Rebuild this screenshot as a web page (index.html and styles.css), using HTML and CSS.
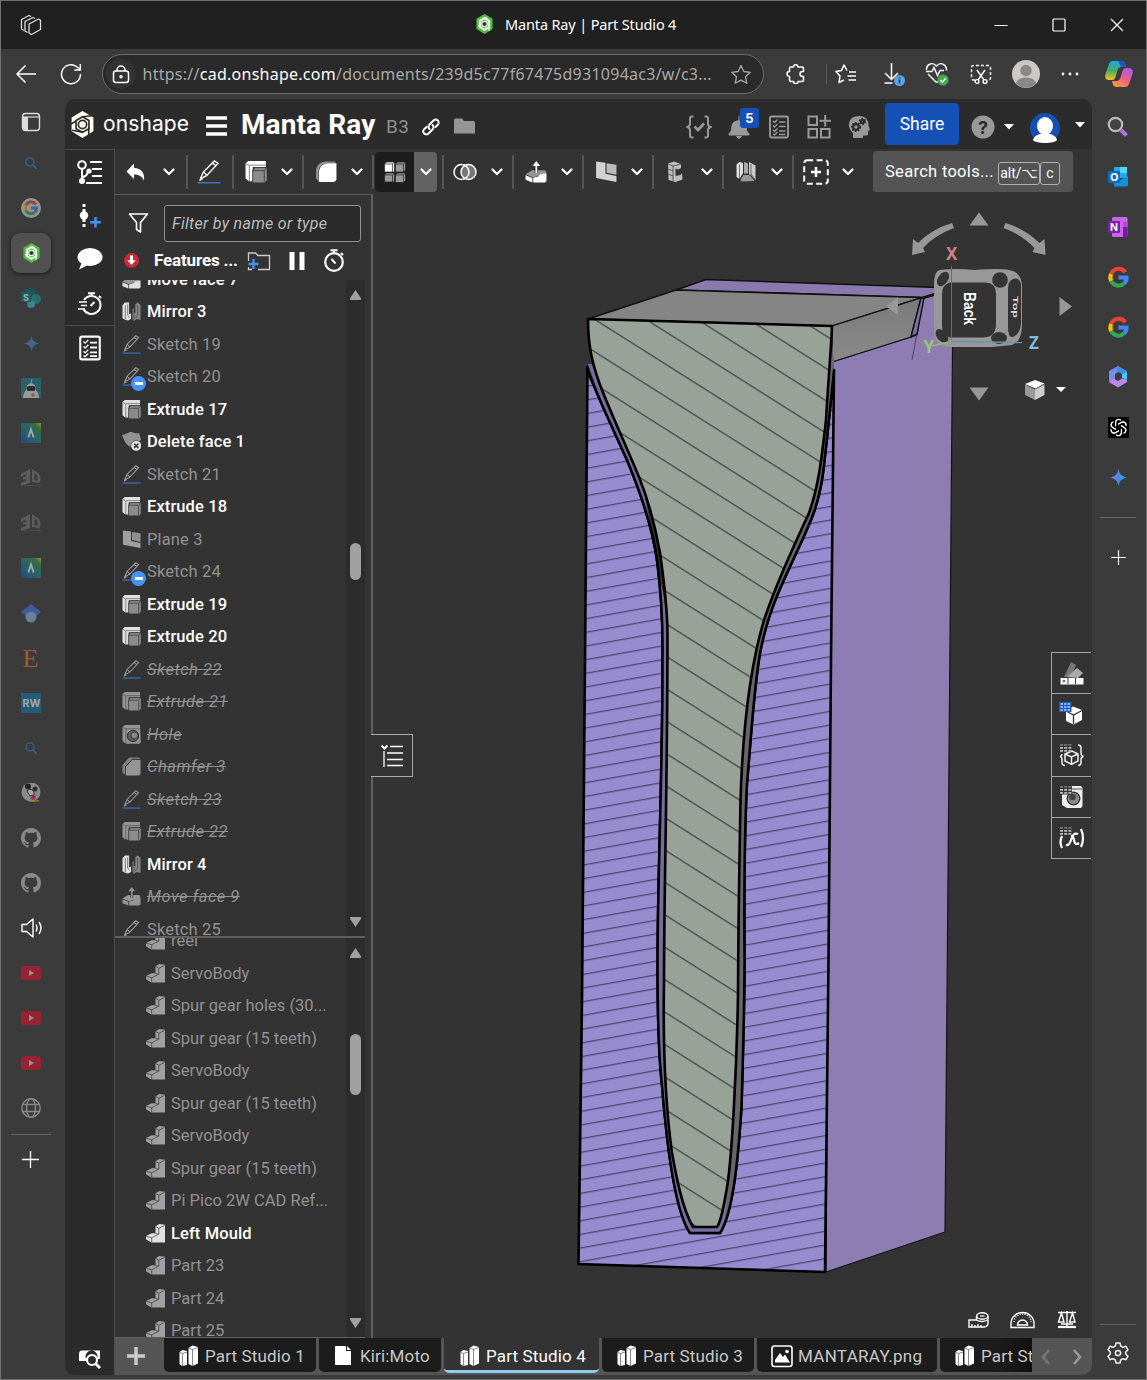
FILE: index.html
```html
<!DOCTYPE html>
<html lang="en">
<head>
<meta charset="utf-8">
<title>Manta Ray | Part Studio 4</title>
<link rel="stylesheet" href="styles.css">
</head>
<body>
<svg class="defs" width="0" height="0" aria-hidden="true">
<defs>
<linearGradient id="gem" x1="0" x2="1" y1="0.3" y2="0.6"><stop offset="0.1" stop-color="#b56fd0"/><stop offset="0.5" stop-color="#4a86e8"/><stop offset="1" stop-color="#1fb0ee"/></linearGradient>
<linearGradient id="ag" x1="0" x2="1" y1="1" y2="0"><stop offset="0" stop-color="#1757b8"/><stop offset="0.55" stop-color="#1a8a8a"/><stop offset="0.8" stop-color="#2c9a3c"/><stop offset="1" stop-color="#e8d820"/></linearGradient>
<symbol id="sketch" viewBox="0 0 20 20"><path d="M3 15.500l2.200-5.500L14.500 0.800l3 2L8 13z M5.500 10l2.800 2.800 M12.800 2.600l3 2.200" fill="none" stroke="currentColor" stroke-width="1.100"/><path d="M1.800 18l1.400-4 2 1.800z" fill="currentColor"/><path d="M0.500 19h19" stroke="#3a76c0" stroke-width="1.200"/></symbol>
<symbol id="extrude" viewBox="0 0 20 20"><path d="M0.500 2L3 0h16v5.500H7V18.500H3.500L.5 16z" fill="currentColor"/><path d="M0.500 2.200L4 4.300V18.500M4 3.800h15" fill="none" stroke="#444" stroke-width="0.600"/><path d="M7 8.500L9 6h10.800v11.500L18 19.500H7z" fill="#8b8b8b"/><path d="M7 19.500V8.500L9 6h10.800M7 8.700h10.500l2.300-2.500M17.500 8.700v10.500" fill="none" stroke="#333" stroke-width="0.700"/></symbol>
<symbol id="mirror" viewBox="0 0 20 20"><path d="M0.500 3.500L3 .5h4.500V13L9.500 12v6l-3 1.500-3-.5-3-2z" fill="currentColor"/><path d="M11 7.500V18l1.500 2 3-2 4 1V3L16.500.5 14 2v9.500h-1.500V6z" fill="#858585"/><path d="M3.500 3.500v15M6 2.500v11.500l2 2M12.500 6v13M16.500 3v11.500l-3 2" fill="none" stroke="#444" stroke-width="0.700"/></symbol>
<symbol id="plane" viewBox="0 0 20 20"><path d="M1 0.500l8.500 1.200v9.800l10 2.200v5.300L1 15.500z" fill="currentColor"/><path d="M10.500 2l9 1.400v9.200l-9-2z" fill="currentColor" opacity="0.850"/></symbol>
<symbol id="fillet" viewBox="0 0 20 20"><path d="M3.500 19V11c0-6 4-9 8-9h8v15l-2 2z" fill="currentColor"/><path d="M1 16V8c1-5 5-7.500 9-7.500h8l1 1h-7C7 1.500 3 5 3 11v7z" fill="#979797"/></symbol>
<symbol id="chamfer" viewBox="0 0 20 20"><path d="M4 19.500v-9L11 3h8.500V18l-1.500 1.500z" fill="currentColor"/><path d="M0.500 8.500l7-8H18l1.500 1.500H11L3.500 10v9L.5 16.500z" fill="#808080"/><path d="M3.700 19.500V10L11 2.500h8.500" fill="none" stroke="#333" stroke-width="0.700"/></symbol>
<symbol id="hole" viewBox="0 0 20 20"><path d="M0.500 2L3 0h16l.8 18-1.300 1.800H4.500L.5 17z" fill="currentColor"/><path d="M0.500 2.500L4 4H19M4 4v15" fill="none" stroke="#444" stroke-width="0.600"/><circle cx="11.500" cy="11.500" r="6" fill="#5b5b5b" stroke="#333"/><circle cx="13" cy="11" r="3.600" fill="#888" stroke="#333" stroke-width="0.800"/></symbol>
<symbol id="moveface" viewBox="0 0 20 20"><path d="M0.500 12l6-3.500h12l1 2.500-12 4z" fill="#979797"/><path d="M7.500 15.200l4.500-1.200 2-2 5.500-.8v7.300l-1.500 1H7.500zM.5 13l6.200 2.500v4L.5 17z" fill="currentColor"/><path d="M10.300 11V3" stroke="#333" stroke-width="3"/><path d="M10.300 11V3" stroke="currentColor" stroke-width="1.600"/><path d="M6.800 4.500L10.300 0l3.500 4.500z" fill="currentColor"/></symbol>
<symbol id="delface" viewBox="0 0 20 20"><path d="M0 3c4 0 6-3 10-3 4 1 5 2 8 1l2 7-6 9C8 17 3 13 0 3z" fill="#929292"/><circle cx="15" cy="14.500" r="5.600" fill="#e0e0e0" stroke="#333" stroke-width="0.600"/><path d="M12.800 12.300l4.400 4.400m0-4.400l-4.400 4.400" stroke="#333" stroke-width="1.600"/></symbol>
<symbol id="part" viewBox="0 0 20 20"><path d="M10 2.300L14 0l6 .8V19.500H5.500L0 16v-3.500l6-2.700h4z" fill="currentColor"/><path d="M10 2.500l3.500 2V10.500L6 14.500 0 12.800M13.500 4.500L19.500 1.500M10 10l3.500.8M6 14.500v5" fill="none" stroke="#333" stroke-width="0.700"/></symbol>
<symbol id="chev" viewBox="0 0 14 10"><path d="M2.500 2.500L7 7l4.500-4.500" fill="none" stroke="#fff" stroke-width="2.200" stroke-linecap="round" stroke-linejoin="round"/></symbol>
<symbol id="check" viewBox="0 0 24 24"><rect x="3" y="1.500" width="18" height="21" rx="1.500" fill="none" stroke="currentColor" stroke-width="1.900"/><path d="M6 6l1.500 1.500L10.500 4.500M6 10.500L7.500 12l3-3M6 15l1.500 1.500 3-3M6 19l1.500 1 3-3" fill="none" stroke="currentColor" stroke-width="1.300"/><path d="M12 7h6.500M12 11.500h6.500M12 16h6.500M12 19.500h6.500" stroke="currentColor" stroke-width="1.700"/></symbol>
<symbol id="google" viewBox="0 0 24 24"><g fill="none" stroke-width="4.200"><path d="M19.200 6.500A8.500 8.500 0 0 0 4.400 8.200" stroke="#ea4335"/><path d="M4.400 8.200a8.500 8.500 0 0 0 0 7.600" stroke="#fbbc05"/><path d="M4.400 15.800A8.500 8.500 0 0 0 17.700 18.300" stroke="#34a853"/><path d="M17.700 18.300c2.200-2 2.800-4.500 2.700-6.300H12" stroke="#4285f4"/></g></symbol>
<symbol id="os" viewBox="0 0 24 26"><path d="M12 0l10.500 6.200v13.300L12 26 1.500 19.500V6.200z" fill="currentColor"/><path d="M12 5.500l6.200 3.700v7.800L12 20.500l-6.200-3.500V9.200z" fill="none" stroke="#2b2b2b" stroke-width="1.600"/><circle cx="12" cy="13" r="4" fill="none" stroke="#2b2b2b" stroke-width="1.600"/><path d="M6 9.500l-5 3M12 5.500l9-1M18 16v7M12 20.500l-10-2" stroke="#2b2b2b" stroke-width="1.500"/></symbol>
<symbol id="osg" viewBox="0 0 24 26"><path d="M12 0l10.500 6.200v13.300L12 26 1.500 19.500V6.200z" fill="#55b948"/><path d="M12 5.500l6 3.400v8L12 20.500l-6-3.600v-8z" fill="none" stroke="#f3fff0" stroke-width="2.600"/><circle cx="12" cy="13" r="3.500" fill="#333" stroke="#f3fff0" stroke-width="1.500"/><path d="M4 15l3 2M11 4.500l5 1M18 18v4" stroke="#fff" stroke-width="1.500"/></symbol>
<symbol id="mag" viewBox="0 0 20 20"><circle cx="8.500" cy="8.500" r="5.800" fill="none" stroke="#2d8be0" stroke-width="2"/><path d="M13 13l5 5" stroke="#2d8be0" stroke-width="2.200"/></symbol>
<symbol id="gemini" viewBox="0 0 20 20"><path d="M10 0.500c.8 6 3.500 8.700 9.500 9.500-6 .8-8.700 3.500-9.500 9.500C9.200 13.500 6.500 10.800.5 10 6.500 9.200 9.200 6.500 10 .5z" fill="url(#gem)"/></symbol>
<symbol id="autod" viewBox="0 0 20 20"><rect width="20" height="20" fill="url(#ag)"/><path d="M7.300 14.500L10 6.500l2.700 8" fill="none" stroke="#fff" stroke-width="1.900"/></symbol>
<symbol id="threeD" viewBox="0 0 20 20"><path d="M0 6L9 1v14L0 18v-3l5-2v-2l-3 .8V9.500L5 8.500V6.500L0 9z" fill="#aaa"/><path d="M11 1l6 4c3 2 3 8 1 10l-7-1zM13.500 5v7l3 .7V8z" fill="#aaa" fill-rule="evenodd"/><path d="M3 18l16-1v2" stroke="#777" fill="none"/></symbol>
<symbol id="github" viewBox="0 0 16 16"><path fill="#ccc" d="M8 0C3.580 0 0 3.580 0 8c0 3.540 2.290 6.530 5.470 7.590.4.070.55-.17.55-.38 0-.19-.01-.82-.01-1.490-2.010.37-2.530-.49-2.690-.94-.09-.23-.48-.94-.82-1.130-.28-.15-.68-.52-.01-.53.63-.01 1.080.58 1.230.82.72 1.210 1.870.87 2.330.66.070-.52.280-.87.510-1.070-1.780-.2-3.640-.89-3.640-3.950 0-.87.310-1.590.82-2.150-.08-.2-.36-1.020.08-2.120 0 0 .67-.21 2.200.82.640-.18 1.320-.27 2-.27s1.360.09 2 .27c1.530-1.040 2.200-.82 2.200-.82.440 1.100.160 1.920.080 2.120.510.560.820 1.270.820 2.150 0 3.070-1.870 3.750-3.650 3.950.290.250.540.730.540 1.480 0 1.070-.01 1.930-.01 2.200 0 .210.150.460.550.380A8.010 8.010 0 0 0 16 8c0-4.420-3.580-8-8-8z"/></symbol>
<symbol id="yt" viewBox="0 0 20 14"><rect width="20" height="14" rx="3" fill="#e0102e"/><path d="M8 4l5 3-5 3z" fill="#ddd"/></symbol>
<symbol id="studio" viewBox="0 0 22 22"><path d="M1.500 7l3-2 4.500 1v14l-5 1-2.500-2zM10.500 3l4-2.500 5.500 1.500v16.500l-5.500 2.500-4-2z" fill="#fff"/><path d="M1.500 7.300L4.500 8.500V21M4.500 8.500L9 7M10.500 3l4 1.500V21M14.500 4.500l5.500-2" fill="none" stroke="#555" stroke-width="0.700"/></symbol>
<symbol id="dots9" viewBox="0 0 12 9"><path d="M0 1h3v1.800H0zM4.200 1h3v1.800h-3zM8.400 1h3v1.800h-3z" fill="#777"/><path d="M0 4h3v1.800H0zM4.200 4h3v1.800h-3zM8.400 4h3v1.800h-3zM0 7h3v1.800H0zM4.200 7h3v1.800h-3zM8.400 7h3v1.800h-3z" fill="#bbb"/></symbol>
</defs>
</svg>

<div class="window">
  <header class="titlebar">
    <svg class="workspaces" width="22" height="22" viewBox="0 0 22 22" fill="none" stroke="#ddd" stroke-width="1.300" stroke-linejoin="round"><path d="M4 16.500L1.500 15V5.500L9 1.500l2 1"/><path d="M7.500 18.500L5 17V7.500L13 3.500l2 1"/><path d="M9 10l9.500-5 2 1.200V15.500L11.500 20.500 9 19z"/></svg>
    <div class="doc-title"><svg width="19" height="20"><use href="#osg"/></svg><span class="fit-title">Manta Ray | Part Studio 4</span></div>
    <div class="controls">
      <svg width="14" height="14"><path d="M0.500 7.500h13" stroke="#fff"/></svg>
      <svg width="14" height="14"><rect x="1" y="1" width="12" height="12" rx="1" fill="none" stroke="#fff" stroke-width="1.200"/></svg>
      <svg width="14" height="14"><path d="M1 1l12 12M13 1L1 13" stroke="#fff" stroke-width="1.200"/></svg>
    </div>
  </header>

  <nav class="browserbar">
    <svg width="22" height="20" fill="none" stroke="#fff" stroke-width="1.500"><path d="M21 10H2M10.500 1.500L2 10l8.500 8.500"/></svg>
    <svg width="22" height="22" fill="none" stroke="#fff" stroke-width="1.500"><path d="M20.500 11A9.500 9.500 0 1 1 16.500 3.500L20 6.500M20.300 1v6h-6"/></svg>
    <span></span>
    <div class="address">
      <span class="lock"><svg width="18" height="19" fill="none" stroke="#fff" stroke-width="1.500"><rect x="1.500" y="6" width="15" height="11.500" rx="2.500"/><path d="M5 6V5a4 4 0 0 1 8 0v1"/><circle cx="9" cy="11.700" r="1" fill="#fff"/></svg></span>
      <span class="url">https://<b>cad.onshape.com</b>/documents/239d5c77f67475d931094ac3/w/c3...</span>
      <svg width="22" height="21" viewBox="0 0 22 21" fill="none" stroke="#aaa" stroke-width="1.300" stroke-linejoin="round"><path d="M11 1.500l2.800 6 6.500.8-4.800 4.500 1.300 6.500-5.800-3.200-5.800 3.200 1.300-6.500L1.700 8.300l6.500-.8z"/></svg>
    </div>
    <svg class="ext" width="20" height="20" viewBox="0 0 20 20" fill="none" stroke="#fff" stroke-width="1.500" stroke-linejoin="round"><path d="M7.500 3a2.200 2.200 0 0 1 4.400 0H16q1.500 0 1.500 1.500V7.500h-1a2.500 2.500 0 0 0 0 5h1V16q0 1.500-1.500 1.500h-4a2.200 2.200 0 0 1-4.400 0H5Q3.500 17.500 3.500 16v-3.500a2.500 2.500 0 0 1 0-5V4.500Q3.500 3 5 3z"/></svg>
    <i class="bar-sep"></i>
    <svg width="22" height="20" fill="none" stroke="#fff" stroke-width="1.500" stroke-linejoin="round"><path d="M12 6.500L9 1 6.500 6.500 1 7.500 5 12l-1 6.500 5-2.500M14 8h7M12.500 12h8.500M13.500 16H21"/></svg>
    <svg class="dl" width="22" height="24" fill="none"><path d="M8.500 1v16M2 11l6.500 6.500L15 11M1.500 21h8" stroke="#fff" stroke-width="1.500"/><circle cx="16.500" cy="18.500" r="5.500" fill="#58a6e4"/><path d="M16.500 17.500v4M16.500 15v1.200" stroke="#234" stroke-width="1.500"/></svg>
    <svg width="24" height="24" fill="none" stroke="#fff" stroke-width="1.400"><path d="M13 20l-2 0L3 12M1.500 8C1 3 7-1 11.500 4 16-1 22 3 21.500 8.500M1 9.500h6l2-4 3.500 8 2.500-5h4"/><circle cx="18" cy="18" r="5.600" fill="#46a84d" stroke="none"/><path d="M15.500 18l2 2 3.500-4"/></svg>
    <svg width="22" height="22" fill="none" stroke="#fff" stroke-width="1.400"><path d="M5 17H3.500Q1.500 17 1.500 15V4.500q0-2 2-2h15q2 0 2 2V15q0 2-2 2H17" stroke-dasharray="3 2"/><path d="M7 7l7 10M15 7L8 17"/><circle cx="7" cy="18.500" r="1.900"/><circle cx="15" cy="18.500" r="1.900"/></svg>
    <svg width="28" height="28"><circle cx="14" cy="14" r="14" fill="#cbc9c6"/><circle cx="14" cy="10.500" r="5.800" fill="#8b8986"/><path d="M4 23.500c1-8 19-8 20 0a14 14 0 0 1-20 0" fill="#8b8986"/></svg>
    <svg width="18" height="4" fill="#fff"><circle cx="2" cy="2" r="1.400"/><circle cx="9" cy="2" r="1.400"/><circle cx="16" cy="2" r="1.400"/></svg>
    <svg width="28" height="28" viewBox="0 0 28 28"><defs><linearGradient id="cpa" x1="0" x2="0" y1="0" y2="1"><stop offset="0" stop-color="#20a8ee"/><stop offset="0.5" stop-color="#48a968"/><stop offset="1" stop-color="#f3c51a"/></linearGradient><linearGradient id="cpb" x1="0.8" x2="0.2" y1="0" y2="1"><stop offset="0" stop-color="#a45bea"/><stop offset="0.5" stop-color="#ef5e88"/><stop offset="1" stop-color="#ff9a35"/></linearGradient></defs><path d="M8 1h8c3 0 4 1.500 5 6h-4c-3 0-4 1.500-5 5l-1.500 5C9.800 19 9 20 7 20H4c-3.500 0-4.500-3-3.500-6L4 4c.7-2 2-3 4-3z" fill="url(#cpa)"/><path d="M13 1h3c3 0 4 1.500 5 6h-5z" fill="#1b56c8"/><path d="M20 27h-8c-3 0-4-1.500-5-6h4c3 0 4-1.500 5-5l1.500-5c.7-2 1.500-3 3.500-3h3c3.500 0 4.500 3 3.500 6L24 24c-.7 2-2 3-4 3z" fill="url(#cpb)"/></svg>
  </nav>

  <div class="main">
    <aside class="vtabs">
      <div class="vtab top"><svg width="20" height="20"><rect x="1.500" y="1.500" width="17" height="17" rx="3" fill="none" stroke="#ddd" stroke-width="1.400"/><path d="M2 5h5v13H4q-2 0-2-2z" fill="#ddd"/><path d="M2 5h16" stroke="#ddd" stroke-width="1.200"/></svg></div>
      <div class="vtab dim"><svg width="14" height="14"><use href="#mag"/></svg></div>
      <div class="vtab dim"><svg width="20" height="20"><circle cx="10" cy="10" r="10" fill="#ddd"/><use href="#google" x="2" y="2" width="16" height="16"/></svg></div>
      <div class="vtab active"><svg width="19" height="20"><use href="#osg"/></svg></div>
      <div class="vtab dim"><svg width="20" height="20"><circle cx="9" cy="6" r="6" fill="#036c70"/><circle cx="15" cy="11" r="5" fill="#1a9ba1"/><circle cx="10" cy="16" r="4" fill="#37c6d0"/><rect y="4" width="10" height="10" rx="1" fill="#03787c"/><text x="2" y="12.500" class="ico-letter" font-size="9" fill="#fff">S</text></svg></div>
      <div class="vtab dim"><svg width="17" height="17"><use href="#gemini"/></svg></div>
      <div class="vtab dim"><svg width="20" height="20"><rect width="20" height="20" fill="#1b8191"/><path d="M2 20c0-5 2-6 3-8 0-9 10-9 10 0 1 2 3 3 3 8z" fill="#e5e5e5"/><path d="M10 5l1-4" stroke="#ddd"/><rect x="5.500" y="8" width="9" height="5" rx="2.500" fill="#222"/><circle cx="12" cy="17" r="1.800" fill="#e66"/></svg></div>
      <div class="vtab dim"><svg width="20" height="20"><use href="#autod"/></svg></div>
      <div class="vtab dimmer"><svg width="20" height="20"><use href="#threeD"/></svg></div>
      <div class="vtab dimmer"><svg width="20" height="20"><use href="#threeD"/></svg></div>
      <div class="vtab dim"><svg width="20" height="20"><use href="#autod"/></svg></div>
      <div class="vtab dim"><svg width="20" height="20"><path d="M10 1l10 8-10 8L0 9z" fill="#3f7be8"/><circle cx="10" cy="14" r="5.500" fill="#94b3ee"/></svg></div>
      <div class="vtab dim"><svg width="20" height="32"><text x="1.500" y="24.500" class="ico-serif" fill="#f1741e">E</text></svg></div>
      <div class="vtab dim"><svg width="20" height="20"><rect width="20" height="20" fill="#1277a8"/><text x="1.500" y="14" class="ico-letter" font-size="10.500" fill="#fff">RW</text></svg></div>
      <div class="vtab dim"><svg width="14" height="14"><use href="#mag"/></svg></div>
      <div class="vtab dim"><svg width="20" height="20"><circle cx="10" cy="9" r="9.500" fill="#ccc"/><circle cx="7" cy="3.500" r="3" fill="#111"/><circle cx="14" cy="6" r="2.500" fill="#222"/><path d="M6 8c4-4 8 0 7 4l-4 1z" fill="#fff" stroke="#222"/><path d="M12 12l3 1-1 4-5-1z" fill="#d33"/><path d="M8 19q3-3 5-1 4-2 6 0l-5 1z" fill="#e0b000"/></svg></div>
      <div class="vtab dim"><svg width="20" height="20"><use href="#github"/></svg></div>
      <div class="vtab dim"><svg width="20" height="20"><use href="#github"/></svg></div>
      <div class="vtab"><svg width="21" height="20" fill="none" stroke="#fff" stroke-width="1.400" stroke-linejoin="round"><path d="M1 6.500h4.500L12 1v18l-6.500-5.500H1zM15 6.500q2 3.500 0 7M18 4q4 6 0 12"/></svg></div>
      <div class="vtab dim"><svg width="20" height="14"><use href="#yt"/></svg></div>
      <div class="vtab dim"><svg width="20" height="14"><use href="#yt"/></svg></div>
      <div class="vtab dim"><svg width="20" height="14"><use href="#yt"/></svg></div>
      <div class="vtab dim"><svg width="20" height="20" fill="none" stroke="#ccc" stroke-width="1.400"><circle cx="10" cy="10" r="9.200"/><ellipse cx="10" cy="10" rx="4.500" ry="9.200"/><path d="M2 6.500h16M2 13.500h16"/></svg></div>
      <hr>
      <div class="newtab"><svg width="17" height="17"><path d="M8.500 0v17M0 8.500h17" stroke="#fff" stroke-width="1.300"/></svg></div>
    </aside>

    <section class="app">
      <header class="apphead">
        <svg class="oslogo" width="25" height="27"><use href="#os"/></svg>
        <span class="wordmark">onshape</span>
        <svg class="burger" width="21" height="20"><path d="M0 2h21M0 10h21M0 18h21" stroke="#fff" stroke-width="3.400"/></svg>
        <h1>Manta Ray</h1>
        <span class="branch">B3</span>
        <svg class="link" width="18" height="18" viewBox="0 0 18 18" fill="none" stroke="#fff" stroke-width="1.900" stroke-linecap="round"><path d="M7.500 11a3.300 3.300 0 0 1 0-4.500l4-4a3 3 0 0 1 4.300 4.300L13.500 9"/><path d="M10.500 7a3.300 3.300 0 0 1 0 4.500l-4 4a3 3 0 0 1-4.300-4.300L4.500 9"/></svg>
        <svg class="folder" width="21" height="16"><path d="M0 2q0-1.500 1.500-1.500H8L10 3h9.500Q21 3 21 4.500v11H0z" fill="#959595"/></svg>
        <div class="headtools">
          <svg width="26" height="24" viewBox="-1 0 26 24" fill="none" stroke="#999" stroke-width="2"><path d="M6.500 1.500H5q-2 0-2 2V9q0 2-2.500 3Q3 13 3 15v5.500q0 2 2 2h1.500M17.500 1.500H19q2 0 2 2V9q0 2 2.500 3-2.500 1-2.500 3v5.500q0 2-2 2h-1.500"/><path d="M7.500 11.500l3.500 3.500 6-6.500" stroke-width="2.600"/></svg>
          <span class="bell"><svg width="22" height="24"><path d="M1 19q3-2.500 3-8c0-7 14-7 14 0q0 5.500 3 8v1H1zM8.500 21.500h5Q11 25 8.500 21.500zM11 1v4" fill="#999" stroke="#999"/></svg><b>5</b></span>
          <svg class="gray" width="24" height="24"><use href="#check"/></svg>
          <svg width="24" height="24" fill="none" stroke="#999" stroke-width="2"><rect x="1.500" y="1.500" width="8.500" height="8.500"/><rect x="1.500" y="14" width="8.500" height="8.500"/><rect x="14" y="14" width="8.500" height="8.500"/><path d="M18.200 0v11.500M12.500 5.800H24"/></svg>
          <svg width="24" height="24"><path d="M6 23v-5C-1 12 1 1 12 1c8 0 10 6 9.500 10l1.500 4-2 1v3q0 2-3 1.500H16V23z" fill="#999"/><g fill="none" stroke="#2b2b2b" stroke-width="2.200"><circle cx="9" cy="12" r="2.800"/><circle cx="15.500" cy="6.500" r="1.700"/></g><g fill="none" stroke="#2b2b2b" stroke-width="1.400" stroke-dasharray="1.500 1.700"><circle cx="9" cy="12" r="4.400"/><circle cx="15.500" cy="6.500" r="3"/></g></svg>
        </div>
        <button class="share">Share</button>
        <svg class="help" width="24" height="24"><circle cx="12" cy="12" r="11.500" fill="#999"/><text x="12" y="18.500" text-anchor="middle" class="ico-letter" font-size="18" fill="#2b2b2b">?</text></svg>
        <svg class="caret1" width="10" height="6"><path d="M0 0h10L5 5.500z" fill="#fff"/></svg>
        <svg class="avatar" width="30" height="30"><circle cx="15" cy="15" r="15" fill="#1350b2"/><ellipse cx="15" cy="13" rx="8" ry="9" fill="#fff"/><path d="M3 27c2-9 22-9 24 0-2 4-22 4-24 0" fill="#fff"/></svg>
        <svg class="caret2" width="10" height="6"><path d="M0 0h10L5 5.500z" fill="#fff"/></svg>
      </header>

      <div class="appbody">
        <aside class="rail">
          <svg width="26" height="24" fill="none" stroke="#fff" stroke-width="2"><circle cx="5" cy="5" r="3.800"/><path d="M5 9v12M5 17q5 0 6-6M13 2h12M15 9h10M15 16h10M9 23h16"/><circle cx="5" cy="21" r="2" fill="#fff"/><circle cx="12" cy="11" r="1.600" fill="#fff"/></svg>
          <svg width="26" height="24"><path d="M7 0v24" stroke="#fff" stroke-width="3" stroke-dasharray="3 2"/><circle cx="7" cy="11.500" r="4.200" fill="#fff"/><path d="M18.500 13v10.500M13.200 18.200h10.600" stroke="#4393f8" stroke-width="2.600"/></svg>
          <svg width="26" height="22"><ellipse cx="13" cy="9" rx="12.500" ry="9" fill="#fff"/><path d="M5 14l-3 7.500 10-5z" fill="#fff"/></svg>
          <svg width="26" height="24" fill="none" stroke="#fff" stroke-width="2"><path d="M7 8a9 9 0 1 1-.5 9"/><path d="M11 1.300h7M14.500 1v4M22 4l2 2M13.500 14l4-4"/><path d="M2 10h8M4 13.500h6M1 17h7" stroke-width="1.500"/></svg>
          <div class="rail-line"></div>
          <svg class="last" width="26" height="26"><use href="#check"/></svg>
          <svg class="find" width="24" height="21"><path d="M1 5q0-3.500 3-3.500h18V10h-3a6 6 0 1 0-9.500 2H1z" fill="#fff"/><circle cx="14" cy="11" r="5" fill="none" stroke="#fff" stroke-width="2.200"/><path d="M17.500 14.500L22 19" stroke="#fff" stroke-width="2.800"/></svg>
        </aside>

        <div class="work">
          <div class="cadbar">
            <span class="tool undo"><svg width="20" height="20"><path d="M8 1.500v4.500C15.500 6 19 11 18 18.500c-2-4-5-6-10-6V17L0.500 9.500z" fill="#fff"/></svg><svg class="cv"><use href="#chev"/></svg></span>
            <span class="tool single"><svg width="24" height="24"><use href="#sketch"/></svg></span>
            <span class="tool"><svg width="22" height="22"><use href="#extrude"/></svg><svg class="cv"><use href="#chev"/></svg></span>
            <span class="tool"><svg width="22" height="22"><use href="#fillet"/></svg><svg class="cv"><use href="#chev"/></svg></span>
            <span class="tool picked"><svg width="22" height="22"><g stroke="#222" stroke-width="0.700"><path d="M0.500 3l2-2h8v10h-10z" fill="#fff"/><path d="M11.500 3l2-2h8v8l-2 2h-8zM.5 14l2-2h8v9h-10zM11.500 14l2-2h8v7.500l-2 2h-8z" fill="#999"/><path d="M.5 3h8l2-2M8.500 3v8M11.500 3h8l2-2M19.500 3v8M.5 14h8l2-2M8.500 14v7M11.500 14h8l2-2M19.500 14v7" fill="none"/></g></svg><b><svg class="cv"><use href="#chev"/></svg></b></span>
            <span class="tool"><svg width="24" height="20"><circle cx="15.500" cy="10" r="7.500" fill="#777" stroke="#fff" stroke-width="1.500"/><circle cx="8.500" cy="10" r="7.500" fill="none" stroke="#fff" stroke-width="1.500"/></svg><svg class="cv"><use href="#chev"/></svg></span>
            <span class="tool"><svg width="22" height="22"><use href="#moveface"/></svg><svg class="cv"><use href="#chev"/></svg></span>
            <span class="tool lt"><svg width="22" height="22"><use href="#plane"/></svg><svg class="cv"><use href="#chev"/></svg></span>
            <span class="tool lt"><svg width="22" height="22"><path d="M3 2.500L9 .5l7 2.500v4l-3 1.500-2.500-1V15l5-1 1.500-2 .5 6.500-7 2.500-7-2z" fill="#bdbdbd"/><path d="M3 3l5 2 8-2M8 5v15M3 8l5 2M3 13l5 2M8 5" fill="none" stroke="#444" stroke-width="0.800"/></svg><svg class="cv"><use href="#chev"/></svg></span>
            <span class="tool lt"><svg width="22" height="22"><path d="M1.500 3.500l3-2.500 3.500 1v10l-3.500 6-3-2z" fill="#e0e0e0"/><path d="M9 1l4 1.500v10H9z" fill="#aaa"/><path d="M14 1l6.500 3.500v15l-5-6H14z" fill="#ccc"/><path d="M8.500 14h6l5 6-13 .5-1-1.500z" fill="#999"/><path d="M4.500 3.500V18M16 3v10l4.500 6" stroke="#444" fill="none" stroke-width="0.700"/></svg><svg class="cv"><use href="#chev"/></svg></span>
            <span class="tool end"><svg width="26" height="26" fill="none" stroke="#fff" stroke-width="2"><rect x="1.200" y="1.200" width="23.600" height="23.600" rx="3" stroke-dasharray="6 3.400"/><path d="M13 8v10M8 13h10" stroke-width="2.500"/></svg><svg class="cv"><use href="#chev"/></svg></span>
            <div class="toolsearch"><span>Search tools...</span><kbd class="k1">alt/⌥</kbd><kbd class="k2">c</kbd></div>
          </div>

          <div class="stage">
            <section class="tree">
              <div class="filter">
                <svg width="21" height="22"><path d="M1.500 2h18L12.500 10.500V20l-4-2.500V10.500z" fill="none" stroke="#fff" stroke-width="1.600" stroke-linejoin="round"/></svg>
                <div class="input">Filter by name or type</div>
              </div>
              <div class="treehead">
                <svg width="15" height="15"><circle cx="7.500" cy="7.500" r="7.500" fill="#c62a35"/><path d="M7.500 2.500v6" stroke="#fff" stroke-width="3"/><path d="M3.300 7.300h8.400L7.500 12z" fill="#fff"/></svg>
                <b class="feat">Features ...</b>
                <svg class="t1" width="24" height="19"><path d="M1.500 9V1h7l2.500 2.500h11.500V17.500H11M1.500 15v2.500H5" fill="none" stroke="#ccc" stroke-width="1.300"/><path d="M6.500 7v10M1.500 12h10" stroke="#4393f8" stroke-width="2.400"/></svg>
                <svg class="t2" width="16" height="18"><path d="M3 0v18M13 0v18" stroke="#fff" stroke-width="5"/></svg>
                <svg class="t3" width="22" height="23"><circle cx="11" cy="13" r="8.800" fill="none" stroke="#fff" stroke-width="2.200"/><path d="M7.500 1.200h7M11 1v4M18 4l2 2M8.500 10l4 4.500" stroke="#fff" stroke-width="1.900"/></svg>
              </div>
              <div class="pane features">
                <ul class="rows">
                  <li><svg><use href="#moveface"/></svg><span>Move face 7</span></li>
                  <li><svg><use href="#mirror"/></svg><span>Mirror 3</span></li>
                  <li class="off"><svg><use href="#sketch"/></svg><span>Sketch 19</span></li>
                  <li class="off"><svg><use href="#sketch"/></svg><i class="minus"></i><span>Sketch 20</span></li>
                  <li><svg><use href="#extrude"/></svg><span>Extrude 17</span></li>
                  <li><svg><use href="#delface"/></svg><span>Delete face 1</span></li>
                  <li class="off"><svg><use href="#sketch"/></svg><span>Sketch 21</span></li>
                  <li><svg><use href="#extrude"/></svg><span>Extrude 18</span></li>
                  <li class="off"><svg><use href="#plane"/></svg><span>Plane 3</span></li>
                  <li class="off"><svg><use href="#sketch"/></svg><i class="minus"></i><span>Sketch 24</span></li>
                  <li><svg><use href="#extrude"/></svg><span>Extrude 19</span></li>
                  <li><svg><use href="#extrude"/></svg><span>Extrude 20</span></li>
                  <li class="off sup"><svg><use href="#sketch"/></svg><span>Sketch 22</span></li>
                  <li class="off sup"><svg><use href="#extrude"/></svg><span>Extrude 21</span></li>
                  <li class="off sup"><svg><use href="#hole"/></svg><span>Hole</span></li>
                  <li class="off sup"><svg><use href="#chamfer"/></svg><span>Chamfer 3</span></li>
                  <li class="off sup"><svg><use href="#sketch"/></svg><span>Sketch 23</span></li>
                  <li class="off sup"><svg><use href="#extrude"/></svg><span>Extrude 22</span></li>
                  <li><svg><use href="#mirror"/></svg><span>Mirror 4</span></li>
                  <li class="off sup"><svg><use href="#moveface"/></svg><span>Move face 9</span></li>
                  <li class="off"><svg><use href="#sketch"/></svg><span>Sketch 25</span></li>
                </ul>
                <div class="scroll"><i class="up"></i><i class="thumb f"></i><i class="down"></i></div>
              </div>
              <div class="pane parts">
                <ul class="rows">
                  <li class="off"><svg><use href="#part"/></svg><span>reel</span></li>
                  <li class="off"><svg><use href="#part"/></svg><span>ServoBody</span></li>
                  <li class="off"><svg><use href="#part"/></svg><span>Spur gear holes (30...</span></li>
                  <li class="off"><svg><use href="#part"/></svg><span>Spur gear (15 teeth)</span></li>
                  <li class="off"><svg><use href="#part"/></svg><span>ServoBody</span></li>
                  <li class="off"><svg><use href="#part"/></svg><span>Spur gear (15 teeth)</span></li>
                  <li class="off"><svg><use href="#part"/></svg><span>ServoBody</span></li>
                  <li class="off"><svg><use href="#part"/></svg><span>Spur gear (15 teeth)</span></li>
                  <li class="off"><svg><use href="#part"/></svg><span>Pi Pico 2W CAD Ref...</span></li>
                  <li><svg><use href="#part"/></svg><span>Left Mould</span></li>
                  <li class="off"><svg><use href="#part"/></svg><span>Part 23</span></li>
                  <li class="off"><svg><use href="#part"/></svg><span>Part 24</span></li>
                  <li class="off"><svg><use href="#part"/></svg><span>Part 25</span></li>
                </ul>
                <div class="scroll"><i class="up"></i><i class="thumb p"></i><i class="down"></i></div>
              </div>
            </section>

            <section class="canvas">
              <svg class="model" width="718" height="1143" viewBox="373 195 718 1143">
                <defs>
                  <pattern id="hp" width="100" height="13.660" patternUnits="userSpaceOnUse" patternTransform="translate(0 778.100) skewY(-10.200)"><rect width="100" height="13.660" fill="#988cd0"/><rect width="100" height="1.300" fill="#4d4570"/></pattern>
                  <pattern id="hg" width="100" height="32.420" patternUnits="userSpaceOnUse" patternTransform="translate(0 234.300) skewY(32.300)"><rect width="100" height="32.420" fill="#98a299"/><rect width="100" height="1.700" fill="#4c514c"/></pattern>
                  <linearGradient id="side" x1="0" x2="1"><stop offset="0" stop-color="#8d7db5"/><stop offset="1" stop-color="#8f7db0"/></linearGradient>
                  <linearGradient id="gs" x1="0" x2="0" y1="0" y2="1"><stop offset="0" stop-color="#7a7a7a"/><stop offset="1" stop-color="#8a8a8a"/></linearGradient>
                </defs>
                <g stroke-linejoin="round">
                  <path d="M832 362L917 335 922 299 953 290 945 1232 826 1272z" fill="url(#side)" stroke="#16121c" stroke-width="1.200"/>
                  <path d="M676 290L706 279.500 953 288 922 297.500z" fill="#8979ad" stroke="#111" stroke-width="1.600"/>
                  <path d="M588 319L676 290 922 297.500 832 326z" fill="#858585" stroke="#111" stroke-width="1.700"/>
                  <path d="M832 326L921 298 911 337 832 362z" fill="url(#gs)" stroke="#111" stroke-width="1.300"/>
                  <path d="M921 298L924 298 917 334 911 337z" fill="#8070a8" stroke="#111" stroke-width="1.400"/>
                  <path d="M917 334L912 360" stroke="#4c4460" stroke-width="1"/>
                  <path d="M830 326L834 362 834 372 832 500 800 560 780 500 822 372z" fill="#686568"/>
                  <path d="M587.500 367L588.500 373 603 407 627 460C640 491 652 525 657 560 661 590 663 630 662.500 660 663 720 660 820 658.500 890 657 960 657 1040 662 1085 666 1135 674 1210 690 1233H720C733 1213 738 1160 741.500 1107 743.500 1040 744.500 990 744.500 960 744 890 745 820 747 783 751 740 753 695 760 653 767 615 780 588 793 560 808 527 818 510 823 473 827 440 831 400 834 370L831 660 828.500 960 825 1272 578.500 1264 582 1000 585 660z" fill="url(#hp)" stroke="#000" stroke-width="2.600"/>
                  <path d="M588 364L603 407 627 460C640 491 652 525 657 560 661 590 663 630 662.500 660 663 720 660 820 658.500 890 657 960 657 1040 662 1085 666 1135 674 1210 690 1233H720C733 1213 738 1160 741.500 1107L737 1100 700 1100 668 620 640 470 592 364z" fill="#796b9b"/>
                  <path d="M725 1222C733 1213 738 1160 741.500 1107 743.500 1040 744.500 990 744.500 960 744 890 745 820 747 783 751 740 753 695 760 653 767 615 780 588 793 560 808 527 818 510 823 473 827 440 831 400 834 370L826 370 780 560 737 700 730 1150z" fill="#686568"/>
                  <path d="M588.500 373L603 407 627 460C640 491 652 525 657 560 661 590 663 630 662.500 660 663 720 660 820 658.500 890 657 960 657 1040 662 1085 666 1135 674 1210 690 1233H720C733 1213 738 1160 741.500 1107 743.500 1040 744.500 990 744.500 960 744 890 745 820 747 783 751 740 753 695 760 653 767 615 780 588 793 560 808 527 818 510 823 473 827 440 831 400 834 370" fill="none" stroke="#000" stroke-width="2.500"/>
                  <path d="M588 319L832 326C831 350 828 385 826 420 822 455 819 485 809 513 792 550 777 582 764 620 752 660 743 720 740.500 800 739.500 860 738.500 900 738 993 737 1060 732 1165 726 1193Q721 1222 717 1227H693C682 1208 676 1175 672 1153 664 1095 663 1040 664 983 664 890 667.500 780 667.500 633 667 600 663 575 660 553 655 525 649 502 639 477 622 436 608 407 599 382 592 362 588 345 588 319z" fill="url(#hg)" stroke="#000" stroke-width="2.600"/>
                </g>
                <g fill="#989898">
                  <path d="M979 212.500l9.500 13h-19zM979 400.500l9.500-13h-19zM1072 306.500l-12.500-9.500v19zM886 306.500l12-9.500v18z"/>
                  <path d="M912 255l1-16 5 4q14-14 34-20l2 5q-19 7-31 20l2 4zM1045.500 255l-1-16-5 4q-14-14-34-20l-2 5q19 7 31 20l-2 4z"/>
                  <path d="M940 270q15-2 35 0 24-2 34 0 12 2 13 15v42q-1 15-10 18l-20 2h-46q-11-2-12-14v-48q0-14 6-15z"/>
                </g>
                <path d="M950 282.500h36q10 1 10 11v32q-1 12-13 12h-33q-8-2-8-12v-31q0-10 8-12z" fill="#333"/>
                <path d="M1013 279q6-2 8 5v40q-1 10-8 13-5 1-5-10v-38q0-8 5-10z" fill="#343434"/>
                <g fill="#343434"><ellipse cx="943" cy="279" rx="5" ry="8" transform="rotate(35 943 279)"/><ellipse cx="942" cy="336" rx="5" ry="8" transform="rotate(-40 942 336)"/><circle cx="1000" cy="280" r="7.800"/><ellipse cx="999" cy="338" rx="8" ry="6"/></g>
                <text class="cube-face" transform="translate(963.500 292) rotate(90)" textLength="33" lengthAdjust="spacingAndGlyphs">Back</text>
                <text class="cube-side" transform="translate(1012.500 296) rotate(90)" textLength="22" lengthAdjust="spacingAndGlyphs">Top</text>
                <path d="M951.500 266v74" stroke="#8f5f60"/><path d="M951 341.500l71 1" stroke="#6296ad" stroke-width="1.500"/><path d="M949 342l-17 4" stroke="#8fc070" stroke-width="1.500"/>
                <text class="axis" x="946" y="260" fill="#d08088">X</text><text class="axis" x="923.500" y="353" fill="#96c878">Y</text><text class="axis" x="1029" y="349" fill="#80bcdc">Z</text>
                <path d="M1025 384l10-4 9.500 3.500-9 5z" fill="#fff"/><path d="M1025 384.500l10 5V400l-10-5z" fill="#999"/><path d="M1035 389.500l9.500-5V395l-9.500 5z" fill="#ccc"/><path d="M1056 387h10l-5 5z" fill="#fff"/>
                <g fill="none" stroke="#fff" stroke-width="1.400"><path d="M976.500 1320h-7.500v7h15q4-.5 4-4v-7M976.500 1316v4q2 1.500 5.500 1.500t6-2M972 1327v-3M975 1327v-2M978 1327v-3M981 1327v-2"/><ellipse cx="982.300" cy="1316" rx="5.700" ry="3.200"/><path d="M980 1316h4.500" stroke-width="1.200"/><path d="M1011 1327.500v-4a11.500 11 0 0 1 23 0v4z"/><path d="M1017.500 1325a5 5 0 0 1 10 0z"/><path d="M1014 1322a8.500 8 0 0 1 17 0" stroke-dasharray="1 1.500"/><path d="M1058 1327h18" stroke-width="2.200"/><path d="M1058 1312.500h18M1067 1311v15M1061.500 1313l-3 9h5.500zM1072.500 1313l-3 9h5.500zM1061 1324h12"/></g>
              </svg>
              <button class="flyout"><svg width="24" height="24" fill="none" stroke="#fff"><path d="M1.500 1.500l3 3 3-3" stroke-width="2"/><path d="M10 2.500h13M7 9h16M7 15.500h16M7 21.500h16" stroke-width="1.500"/><path d="M4 7v16" stroke-width="1.300"/></svg></button>
              <div class="sidetools">
                <div><svg width="26" height="26"><path d="M5 17L12 2l5 3-5 12z" fill="#777"/><path d="M8 17L18 8l6 5-5 5z" fill="#aaa"/><path d="M1.500 18h23v6.500h-23z" fill="#fff"/><path d="M9 18v6M16.500 18v6" stroke="#333"/><circle cx="5" cy="21" r="1.500" fill="#777"/></svg></div>
                <div><svg width="26" height="26"><path d="M7 9l7-3.500 9 3.500v10l-8.500 4.500L7 20z" fill="#fff"/><path d="M7 10l7.500 4L23 9.500M14.500 14v9" stroke="#333" fill="none" stroke-width="1.300"/><rect width="12.500" height="10" y="1" fill="#1e5cc4"/><path d="M1.500 3h2.500M5 3h2.500M8.500 3H11M1.500 6h2.500M5 6h2.500M8.500 6H11M1.500 9h2.500M5 9h2.500M8.500 9H11" stroke="#a8c8ff" stroke-width="1.600"/></svg></div>
                <div><svg width="26" height="26" fill="none" stroke="#eee" stroke-width="1.500"><path d="M6 12l7-3 6 3v7l-6.500 3.500L6 19zM6 12l6.500 3 6.500-3M12.500 15v7M3 12q0 2-2 2.500 2 .5 2 3v3q0 3 3 3M19 3q3 0 3 3v5q0 3 2.500 3.500Q22 15 22 17.500v3q0 3-3 3"/><use href="#dots9" x="1" y="1" width="12" height="9" stroke="none"/></svg></div>
                <div><svg width="26" height="26"><path d="M3 5L12 2h10l1.500 2v18l-1.500 2H8l-5-3z" fill="#eee"/><path d="M12 5h11" stroke="#555"/><circle cx="14.500" cy="14.500" r="6.300" fill="#888" stroke="#333" stroke-width="1.300"/><circle cx="13.500" cy="13" r="3.300" fill="#444"/><rect width="13" height="9.500" y="1" fill="#333"/><use href="#dots9" x="1" y="1" width="12" height="9"/></svg></div>
                <div><svg width="26" height="26"><g fill="none" stroke="#fff" stroke-width="2.200"><path d="M3 11q-3 6 0 12M22 4q4 9 0 18"/><path d="M7 20q3 1 5-5 2-8 7-6M12 11q2.500 0 3 4 1 6 5 3"/></g><use href="#dots9" x="1" y="1" width="12" height="9"/></svg></div>
              </div>
            </section>
          </div>

          <footer class="doctabs">
            <span class="add"><svg width="20" height="20"><path d="M10 1v18M1 10h18" stroke="#ccc" stroke-width="3.500"/></svg></span>
            <span class="dt d1"><svg width="22" height="22"><use href="#studio"/></svg>Part Studio 1</span>
            <span class="dt d2"><svg width="22" height="22"><path d="M3 1h11v5h5v14H3zM15 1l4 4h-4z" fill="#fff"/></svg>Kiri:Moto</span>
            <span class="dt d3"><svg width="22" height="22"><use href="#studio"/></svg>Part Studio 4</span>
            <span class="dt d4"><svg width="22" height="22"><use href="#studio"/></svg>Part Studio 3</span>
            <span class="dt d5"><svg width="22" height="23"><rect x="1" y="1" width="20" height="20.500" rx="2.500" fill="none" stroke="#fff" stroke-width="1.600"/><path d="M4 17.500V15l5-7 3 4 2-2.500 5 8z" fill="#fff"/><circle cx="16" cy="6.500" r="1.800" fill="#fff"/></svg>MANTARAY.png</span>
            <span class="dt d6"><svg width="22" height="22"><use href="#studio"/></svg>Part Studio 2</span>
            <span class="arrows"><svg width="11" height="18"><path d="M9 2L3 9l6 7" fill="none" stroke="#777" stroke-width="2.600"/></svg><svg width="11" height="18"><path d="M2 2l6 7-6 7" fill="none" stroke="#999" stroke-width="2.600"/></svg></span>
          </footer>
        </div>
      </div>
    </section>

    <aside class="sidebar">
      <div class="sb"><svg width="22" height="22"><circle cx="8.500" cy="8.500" r="6.700" fill="#444" stroke="#bbb" stroke-width="2.200"/><path d="M14 14l5.500 5.500" stroke="#b070e0" stroke-width="4"/></svg></div>
      <div class="sb"><svg width="20" height="20"><path d="M6 0h11q2 0 2 2v9H6z" fill="#28a8ea"/><path d="M12 0h7v6h-7z" fill="#50d9ff"/><path d="M5 10l7 3 8-4v9q0 1.500-2 1.500H6z" fill="#1490df"/><rect y="4" width="12" height="12" rx="1" fill="#0f6cbd"/><text x="2.300" y="13.800" class="ico-letter" font-size="10.500" fill="#fff">O</text></svg></div>
      <div class="sb"><svg width="20" height="20"><rect x="4" width="15.500" height="20" rx="1.500" fill="#ca64ea"/><path d="M15 5h4.500v5H15z" fill="#ae4bd5"/><path d="M15 10h4.500v10H15z" fill="#7719aa"/><rect y="4" width="12" height="12" rx="1" fill="#7a1fa8"/><text x="2" y="13.800" class="ico-letter" font-size="10.500" fill="#fff">N</text></svg></div>
      <div class="sb"><svg width="23" height="23"><use href="#google"/></svg></div>
      <div class="sb"><svg width="23" height="23"><use href="#google"/></svg></div>
      <div class="sb"><svg width="20" height="22"><path d="M10 0L1 5v11l5 3 2.500-4-1.500-2V8l5-3z" fill="#7b8ce8"/><path d="M10 0l9 5v9l-5-3V8L7.500 4z" fill="#3f8ee8"/><path d="M1 16l5-3 4 2 4-2.500 5 1.500v2l-9 5.500z" fill="#b98ae8"/><path d="M14 8.500l5-2.500v8l-5-2z" fill="#45c8f5"/></svg></div>
      <div class="sb"><svg width="21" height="21"><rect width="21" height="21" fill="#000"/><g fill="none" stroke="#fff" stroke-width="1.100" stroke-linecap="round"><g id="petal"><path d="M7.600 8.800V5.200a3 3 0 0 1 5-2.200M10.500 7.100l3.200-1.800a3 3 0 0 1 4.200 2.700"/></g><use href="#petal" transform="rotate(60 10.500 10.500)"/><use href="#petal" transform="rotate(120 10.500 10.500)"/><use href="#petal" transform="rotate(180 10.500 10.500)"/><use href="#petal" transform="rotate(240 10.500 10.500)"/><use href="#petal" transform="rotate(300 10.500 10.500)"/></g></svg></div>
      <div class="sb"><svg width="19" height="19"><use href="#gemini"/></svg></div>
      <hr>
      <div class="plus"><svg width="15" height="15"><path d="M7.500 0v15M0 7.500h15" stroke="#fff" stroke-width="1.200"/></svg></div>
      <hr class="low">
      <div class="gear"><svg width="22" height="22" viewBox="0 0 22 22" fill="none" stroke="#eee" stroke-width="1.500" stroke-linejoin="round"><path d="M9 1h4l.7 3 2.300 1.300 3-1 2 3.500L18.700 10v2l2.300 2.200-2 3.500-3-1-2.300 1.300-.7 3H9l-.7-3L6 16.700l-3 1-2-3.500L3.300 12v-2L1 7.800l2-3.500 3 1L8.300 4z"/><circle cx="11" cy="11" r="2.600"/></svg></div>
    </aside>
  </div>
</div>
</body>
</html>
```
FILE: styles.css
```css
* { box-sizing: border-box; }
body { margin: 0; background: #3b3b3b; color: #fff; font-family: "Noto Sans", sans-serif; }
svg { flex: none; display: block; }
.defs { position: absolute; }
h1, ul { margin: 0; padding: 0; }
button { padding: 0; color: inherit; }
hr { margin: 0; border: 0; border-top: 1px solid #666; }
.window { width: 1147px; height: 1380px; display: flex; flex-direction: column; border: 1px solid #707070; overflow: hidden; background: #3b3b3b; }

.titlebar { height: 48px; background: #202020; display: grid; grid-template-columns: 474px 1fr 152px; align-items: center; }
.workspaces { margin-left: 19px; }
.doc-title { display: flex; align-items: center; gap: 11px; font-size: 14.500px; padding-bottom: 2px; }
.fit-title { letter-spacing: -0.150px; white-space: nowrap; }
.controls { display: flex; gap: 44px; }

.browserbar { height: 50px; flex: none; display: grid; grid-template-columns: 50px 39px 12px 661px 58px 2px 46px 46px 44px 44px 45px 44px 54px; align-items: center; justify-items: center; }
.address { width: 662px; height: 40px; border: 1.500px solid #6c6c6c; border-radius: 20px; background: #2a2a2a; display: flex; align-items: center; padding-left: 4px; }
.lock { width: 30px; height: 30px; border-radius: 15px; background: #333; display: flex; align-items: center; justify-content: center; margin-right: 7px; margin-left: -1px; }
.url { width: 587px; font-size: 16px; letter-spacing: 0.260px; color: #a9a9a9; white-space: nowrap; }
.url b { font-weight: 400; color: #fff; }
.ext { margin-left: 7px; }
.dl { margin-left: 3px; }
.bar-sep { width: 1px; height: 20px; background: #5c5c5c; margin-left: 8px; }

.main { flex: 1; display: flex; min-height: 0; }
.vtabs { width: 64px; display: flex; flex-direction: column; align-items: center; padding-right: 4px; }
.vtab { width: 40px; height: 40px; margin-bottom: 5px; display: flex; align-items: center; justify-content: center; flex: none; }
.vtab.top { height: 42px; margin: 2px 0 0; }
.vtab.dim svg { opacity: 0.550; }
.vtab.dimmer svg { opacity: 0.300; }
.vtab.active { background: #505050; border-radius: 9px; box-shadow: 0 1px 4px #181818; }
.vtabs hr { width: 40px; margin-top: 1px; }
.newtab { margin: 16px 1px 0 0; }

.app { width: 1027px; height: 1276px; flex: none; border-radius: 10px; overflow: hidden; background: #333; display: flex; flex-direction: column; font-family: Roboto, sans-serif; }
.apphead { height: 50px; flex: none; background: #2b2b2b; display: flex; align-items: center; }
.apphead > * { flex: none; }
.oslogo { margin-left: 5px; color: #fffff0; }
.wordmark { font: 400 21px Inter, sans-serif; width: 111px; padding-left: 8px; letter-spacing: 0.100px; position: relative; top: -1px; }
.burger { margin-top: 4px; }
h1 { font: 700 28px Roboto, sans-serif; width: 159px; padding-left: 14px; letter-spacing: 0.100px; white-space: nowrap; }
.branch { font-size: 19px; color: #8f8f8f; width: 36px; letter-spacing: 0.300px; padding-top: 5px; }
.link { margin-top: 5px; }
.folder { margin-left: 14px; margin-top: 3px; }
.headtools { display: grid; grid-template-columns: repeat(5, 40px); justify-items: center; margin-left: 204px; padding-top: 5px; }
.gray { color: #999; }
.bell { position: relative; }
.bell b { position: absolute; left: 12px; top: -7px; width: 19px; height: 20px; background: #1550b4; border-radius: 3px; font: 700 13px/20px Inter, sans-serif; text-align: center; }
.share { width: 74px; height: 42px; margin-left: 6px; border: 0; border-radius: 4px; background: #1550b4; font: 400 17.500px Roboto, sans-serif; }
.help { margin: 5px 0 0 12px; }
.caret1 { margin: 5px 0 0 9px; }
.avatar { margin: 7px 0 0 16px; }
.caret2 { margin: 2px 0 0 15px; }
.ico-letter { font-family: Inter, sans-serif; font-weight: 700; }
.ico-serif { font: 26px "Liberation Serif", serif; }

.appbody { flex: 1; display: flex; min-height: 0; }
.rail { width: 50px; background: #2b2b2b; border-top: 1px solid #4c4c4c; border-right: 1px solid #4c4c4c; display: flex; flex-direction: column; align-items: center; }
.rail > svg:nth-child(1) { margin-top: 10px; }
.rail > svg:nth-child(2) { margin-top: 20px; }
.rail > svg:nth-child(3) { margin-top: 20px; }
.rail > svg:nth-child(4) { margin-top: 22px; }
.rail-line { width: 100%; height: 1px; background: #4c4c4c; margin-top: 9px; }
.rail .last { margin-top: 9px; }
.rail .find { margin-top: auto; margin-bottom: 5px; }
.work { flex: 1; display: flex; flex-direction: column; min-width: 0; }
.cadbar { height: 45px; flex: none; display: flex; align-items: center; }
.tool { width: 70px; height: 34px; display: flex; align-items: center; justify-content: space-between; padding: 0 8px 0 11px; border-right: 2px solid #555; flex: none; }
.tool .cv { width: 14px; height: 10px; }
.tool.undo { width: 73px; padding-right: 10px; }
.tool.single { width: 46px; padding-left: 9px; }
.tool.lt { color: #d2d2d2; }
.tool.picked { height: 40px; padding: 0 0 0 9px; margin-left: 1px; width: 69px; border: 0; background: linear-gradient(90deg, #1c1c1c 40px, transparent 40px); border-radius: 4px; }
.picked b { width: 23px; height: 40px; background: #626262; border-radius: 0 4px 4px 0; display: flex; align-items: center; justify-content: center; margin-right: 7px; }
.tool.picked + .tool { border-left: 2px solid #555; width: 72px; padding-left: 9px; margin-left: -2px; }
.tool.end { border: 0; padding-left: 9px; width: 69px; }
.toolsearch { width: 200px; height: 41px; margin-left: 10px; background: #545454; border-radius: 3px; display: flex; align-items: center; padding-left: 12px; font-size: 16.500px; }
.toolsearch span { width: 113px; white-space: nowrap; letter-spacing: 0.300px; }
kbd { font: 14px Roboto, "DejaVu Sans", sans-serif; border: 1px solid #b0b0b0; border-radius: 3px; height: 23px; line-height: 20px; text-align: center; margin-top: 3px; }
.k1 { width: 42px; }
.k2 { width: 20px; }

.stage { flex: 1; display: flex; min-height: 0; margin-top: 1px; }
.tree { width: 258px; border-top: 1px solid #5c5c5c; border-right: 2px solid #606060; display: flex; flex-direction: column; margin-top: -1px; flex: none; }
.filter { display: flex; align-items: center; padding: 9px 0 0 13px; gap: 15px; height: 47px; }
.input { width: 197px; height: 37px; border: 1px solid #919191; border-radius: 3px; background: #2b2b2b; font: italic 16px/36px Roboto, sans-serif; color: #bdbdbd; padding-left: 7px; letter-spacing: 0.300px; white-space: nowrap; }
.treehead { height: 38px; flex: none; display: flex; align-items: center; padding: 0 0 2px 9px; }
.treehead > * { flex: none; }
.feat { font-size: 17px; width: 108px; padding-left: 15px; letter-spacing: -0.150px; white-space: nowrap; }
.t1 { margin-top: 3px; }
.t2 { margin-left: 18px; margin-top: 2px; }
.t3 { margin-left: 18px; }
.pane { display: flex; overflow: hidden; width: 250px; }
.features { height: 658px; border-bottom: 2px solid #606060; flex: none; }
.parts { flex: 1; border-bottom: 1px solid #606060; }
.rows { width: 231px; list-style: none; padding-left: 7px; margin-top: -17px; }
.parts .rows { padding-left: 31px; margin-top: -13.500px; }
.rows li { height: 32.500px; display: flex; align-items: center; gap: 6px; font-size: 16.500px; font-weight: 500; white-space: nowrap; position: relative; color: #e0e0e0; }
.rows li span { color: #fff; letter-spacing: 0.100px; }
.rows li svg { width: 19px; height: 19px; }
.rows li.off { color: #a0a0a0; }
.rows li.off span { color: #929292; font-weight: 400; letter-spacing: 0.150px; }
.parts .rows li.off span { letter-spacing: 0; }
.rows li.sup span, .rows li.off.sup span { font-style: italic; text-decoration: line-through; letter-spacing: 0.500px; }
.rows li.sup { color: #959595; }
.minus { position: absolute; left: 9px; top: 15px; width: 15px; height: 15px; border-radius: 8px; background: #4393f8; }
.minus::after { content: ""; position: absolute; left: 3.500px; top: 6px; width: 8px; height: 3px; background: #fff; }
.scroll { width: 19px; background: #2c2c2c; display: flex; flex-direction: column; align-items: center; padding: 10px 0 9px; }
.up, .down { width: 12px; height: 10px; background: #a0a0a0; }
.up { clip-path: polygon(50% 0, 100% 90%, 90% 100%, 10% 100%, 0 90%); }
.down { clip-path: polygon(0 10%, 10% 0, 90% 0, 100% 10%, 50% 100%); margin-top: auto; }
.thumb { width: 11px; border-radius: 6px; background: #a0a0a0; }
.thumb.f { height: 37px; margin-top: 243px; }
.thumb.p { height: 61px; margin-top: 76px; }

.canvas { flex: 1; position: relative; }
.model { position: absolute; left: 0; top: 0; }
.cube-face { font: 700 16px "Liberation Sans", sans-serif; fill: #fff; }
.cube-side { font: 700 7px "Liberation Sans", sans-serif; fill: #ddd; }
.axis { font: 700 17px "Noto Sans", sans-serif; }
.flyout { position: absolute; left: -2px; top: 539px; width: 42px; height: 43px; border: 1px solid #ababab; border-left: 0; background: #333; display: flex; align-items: center; justify-content: center; }
.sidetools { position: absolute; right: 1px; top: 457px; width: 40px; border: 1px solid #a5a5a5; border-right: 0; border-bottom: 0; }
.sidetools div { height: 41.200px; border-bottom: 1px solid #a5a5a5; display: flex; align-items: center; justify-content: center; }

.doctabs { height: 37px; flex: none; background: #555; display: flex; font-size: 17px; color: #c8c8c8; white-space: nowrap; }
.add { width: 49px; display: flex; align-items: center; padding: 0 0 1px 11px; }
.dt { height: 34px; background: #1c1c1c; border-radius: 0 0 5px 5px; display: flex; align-items: center; gap: 5px; padding: 2px 0 0 14px; margin-right: 3px; overflow: hidden; flex: none; letter-spacing: 0.150px; }
.d1 { width: 152px; }
.d2 { width: 122px; gap: 6px; padding-left: 13px; }
.d3 { width: 155px; background: #333; color: #fff; border-bottom: 3px solid #8ccdf0; padding: 4px 0 0 15px; height: 35px; }
.d4 { width: 152px; }
.d5 { width: 180px; letter-spacing: 0.300px; }
.d6 { width: 92px; margin-right: 0; border-radius: 0 0 0 5px; background: linear-gradient(90deg, #1c1c1c 60%, #111 100%); }
.arrows { display: flex; align-items: center; gap: 21px; padding-left: 8px; }

.sidebar { flex: 1; display: flex; flex-direction: column; align-items: center; padding: 3px 2px 0 0; }
.sb { height: 50px; display: flex; align-items: center; justify-content: center; flex: none; }
.sidebar hr { width: 36px; margin-top: 15px; }
.plus { margin-top: 32px; }
.sidebar .low { margin-top: auto; }
.gear { margin: 17px 0 15px; }
```
